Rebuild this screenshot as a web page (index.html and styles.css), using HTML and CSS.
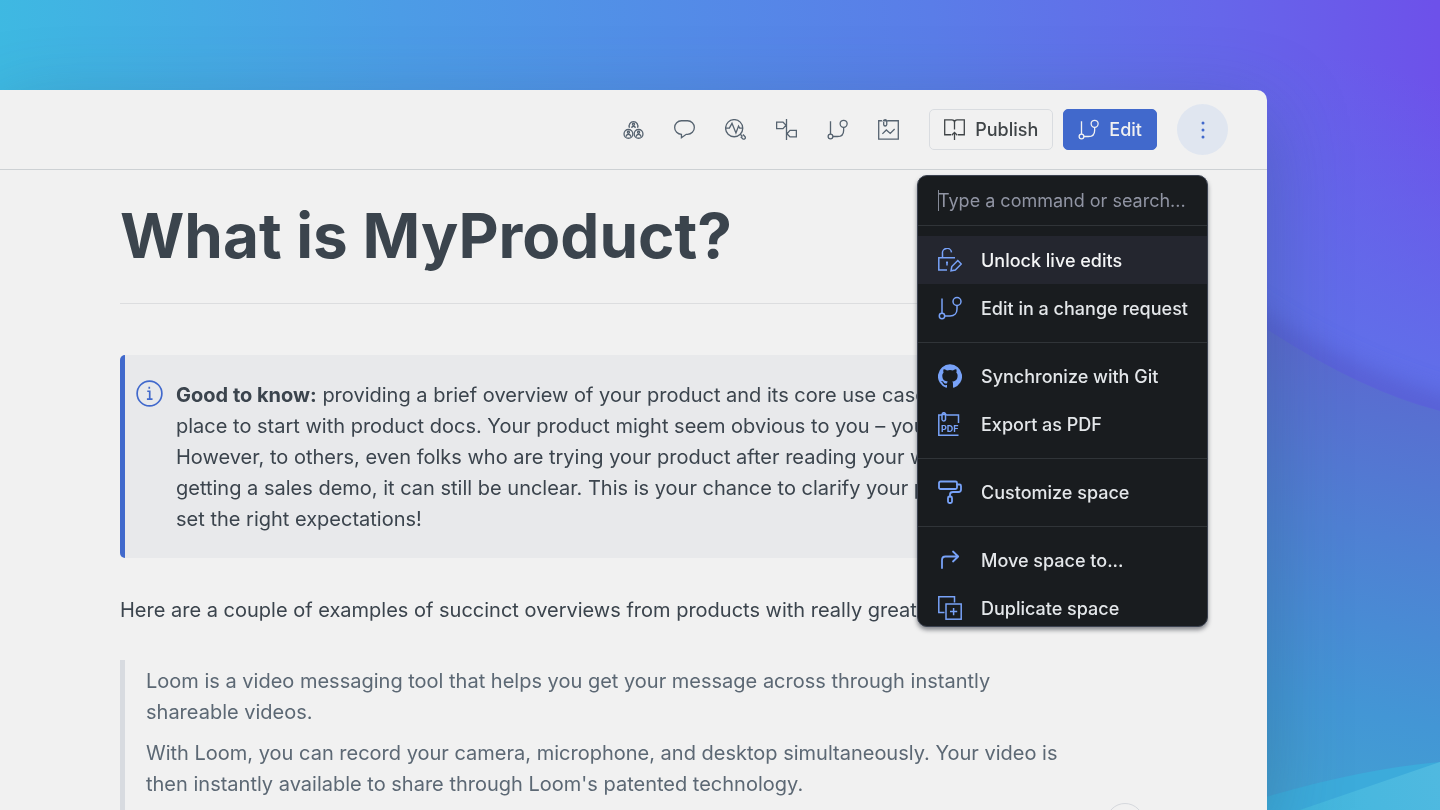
FILE: index.html
```html
<!DOCTYPE html>
<html lang="en">
<head>
<meta charset="utf-8">
<title>What is MyProduct?</title>
<link rel="stylesheet" href="styles.css">
</head>
<body>
<svg class="backdrop" viewBox="0 0 1440 810" preserveAspectRatio="none" aria-hidden="true">
  <defs>
    <linearGradient id="sky" gradientUnits="userSpaceOnUse" x1="0" y1="60" x2="1430" y2="-60">
      <stop offset="0" stop-color="#3eb9e2"/>
      <stop offset="0.28" stop-color="#4c9ce6"/>
      <stop offset="0.65" stop-color="#5a7de8"/>
      <stop offset="0.85" stop-color="#6666ea"/>
      <stop offset="1" stop-color="#6d51ea"/>
    </linearGradient>
    <linearGradient id="dome" gradientUnits="userSpaceOnUse" x1="1400" y1="70" x2="1300" y2="340">
      <stop offset="0" stop-color="#626be9" stop-opacity="0"/>
      <stop offset="1" stop-color="#6070e9"/>
    </linearGradient>
    <linearGradient id="sea" gradientUnits="userSpaceOnUse" x1="1400" y1="360" x2="1310" y2="790">
      <stop offset="0" stop-color="#5b69d0"/>
      <stop offset="0.4" stop-color="#4f80d3"/>
      <stop offset="0.8" stop-color="#4396d5"/>
      <stop offset="1" stop-color="#429fd3"/>
    </linearGradient>
    <linearGradient id="wave" gradientUnits="userSpaceOnUse" x1="1440" y1="760" x2="1300" y2="810">
      <stop offset="0" stop-color="#50b9e0"/>
      <stop offset="1" stop-color="#43b7de"/>
    </linearGradient>
    <filter id="soft" x="-50%" y="-50%" width="200%" height="200%"><feGaussianBlur stdDeviation="12"/></filter>
  </defs>
  <rect width="1440" height="810" fill="url(#sky)"/>
  <rect x="1240" y="60" width="200" height="370" fill="url(#dome)"/>
  <path d="M1200 284Q1330 385 1480 420" fill="none" stroke="#5356c8" stroke-width="26" opacity="0.7" filter="url(#soft)"/>
  <path d="M1240 311Q1350 388 1440 411V810H1240Z" fill="url(#sea)"/>
  <path d="M1240 805Q1350 770 1440 762V810H1240Z" fill="#3cabdb"/>
  <path d="M1300 810L1440 762V810Z" fill="url(#wave)"/>
</svg>

<svg class="sprite" aria-hidden="true">
  <symbol id="branch" viewBox="0 0 24 24"><path d="M4 2.5v15"/><circle cx="4" cy="20" r="2.7"/><circle cx="19" cy="5.5" r="4"/><path d="M6.700 20H12C16.500 20 19 17 19 13V9.500"/></symbol>
</svg>

<div class="window">
  <header class="toolbar">
    <nav class="tools" aria-label="Page tools">
      <button class="tool" aria-label="Team"><svg class="icon" viewBox="0 0 24 24"><path d="M7.400 10A5 5 0 1 1 16.600 10"/><circle cx="12" cy="6" r="1.200"/><path d="M10 10.300q0-2 2-2t2 2"/><circle cx="6.200" cy="17" r="5"/><circle cx="6.200" cy="15.200" r="1.200"/><path d="M3.500 20.300q.2-2.800 2.700-2.800t2.700 2.800"/><circle cx="17.800" cy="17" r="5"/><circle cx="17.800" cy="15.200" r="1.200"/><path d="M15.100 20.300q.2-2.800 2.700-2.800t2.700 2.800"/></svg></button>
      <button class="tool" aria-label="Comments"><svg class="icon" viewBox="0 0 24 24"><path d="M8.500 2h7a7.500 7.500 0 0 1 0 15.500H14L8.500 21.500V17.500A7.500 7.500 0 0 1 8.500 2Z"/></svg></button>
      <button class="tool" aria-label="Insights"><svg class="icon" viewBox="0 0 24 24"><circle cx="10.500" cy="10.500" r="9.800"/><path d="M.7 10.500H5L8 5l4.500 11 3-8 1.300 2.500h3.500M17.500 17.500l2.500 2.500M20.500 17.800l2.200 2.200q1.200 1.400 0 2.500t-2.500 0L18 20.200"/></svg></button>
      <button class="tool" aria-label="Outline"><svg class="icon" viewBox="0 0 24 24"><path d="M12 0v24M.7 3.500H8L11.500 7.200 8 11H.7ZM23.300 13H16L12.500 16.800 16 20.500h7.300Z"/></svg></button>
      <button class="tool" aria-label="Change requests"><svg class="icon"><use href="#branch"/></svg></button>
      <button class="tool" aria-label="Files"><svg class="icon" viewBox="0 0 24 24"><path d="M4.500 2H.8V23H23.200V2H11M6.500 3.500V6.500q.2 1.500 1.700 1.500T10 6.500V2.500Q9.700.8 8.200.8T6 2.200H11M5 17l4.500-4.500 4.500 4 5-5"/></svg></button>
    </nav>
    <div class="actions">
      <button class="btn"><svg class="icon" viewBox="0 0 24 24"><path d="M8 18H.8V1H9q3 0 3 3 0-3 3-3H23.200V18H16M12 4V12M12 24V15.500M8.800 18.500 12 15.300l3.200 3.200"/></svg>Publish</button>
      <button class="btn btn-primary"><svg class="icon"><use href="#branch"/></svg>Edit</button>
    </div>
    <div class="more">
      <button class="more-button" aria-label="More actions" aria-expanded="true"><svg class="dots" viewBox="0 0 24 24"><circle cx="12" cy="5" r="1.500"/><circle cx="12" cy="12" r="1.500"/><circle cx="12" cy="19" r="1.500"/></svg></button>
      <div class="menu">
        <div class="search"><input class="search-input" type="text" aria-label="Command" placeholder="Type a command or search..."></div>
        <div class="group">
          <button class="item active"><svg class="icon" viewBox="0 0 24 24"><path d="M4.500 9.500V5.500a4.500 4.500 0 0 1 9-1.200M9 22H.8V9.800H17M9 13.500v4M8 14.500h2M13 22.800l.8-4.300 6-6 3.500 3.500-6 6Z"/></svg>Unlock live edits</button>
          <button class="item"><svg class="icon"><use href="#branch"/></svg>Edit in a change request</button>
        </div>
        <div class="group">
          <button class="item"><svg class="icon solid" viewBox="0 0 24 24"><path d="M12 .3a12 12 0 0 0-3.800 23.400c.6.1.8-.3.800-.6v-2c-3.300.7-4-1.600-4-1.600-.6-1.400-1.400-1.800-1.400-1.800-1-.7.1-.7.1-.7 1.200 0 1.900 1.200 1.900 1.200 1 1.800 2.800 1.300 3.500 1 0-.8.4-1.300.7-1.600-2.700-.3-5.500-1.300-5.500-6 0-1.200.5-2.300 1.300-3.100-.2-.4-.6-1.600 0-3.200 0 0 1-.3 3.400 1.200a11.500 11.500 0 0 1 6 0c2.300-1.500 3.300-1.200 3.300-1.200.6 1.600.2 2.800 0 3.200.9.800 1.300 1.900 1.300 3.200 0 4.600-2.800 5.600-5.500 5.900.5.400.9 1 .9 2.200v3.300c0 .3.1.7.800.6A12 12 0 0 0 12 .3"/></svg>Synchronize with Git</button>
          <button class="item"><svg class="icon" viewBox="0 0 24 24"><path d="M4 3H.8V23.200H20.500M8.500 3H20.500V11M4 2.500V7.500q.2 1.500 1.700 1.500T7.500 7.500V2.200Q7.300.7 5.800.7T4 2.500H8.500"/><text class="badge-text" x="3" y="20">PDF</text></svg>Export as PDF</button>
        </div>
        <div class="group">
          <button class="item"><svg class="icon bold" viewBox="0 0 24 24"><rect x="1" y="1.500" width="18" height="7.500" rx="1.500"/><path d="M19 4.500H21.500Q23 4.500 23 6V9.500Q23 12 20.500 12H15Q12 12 12 14.500V16.500"/><rect x="10" y="16.500" width="4" height="6.500" rx="1.500"/></svg>Customize space</button>
        </div>
        <div class="group">
          <button class="item"><svg class="icon bold" viewBox="0 0 24 24"><path d="M4 20V12Q4 8.500 7.500 8.500H20M15 3.500 20.200 8.500 15 13.500"/></svg>Move space to...</button>
          <button class="item"><svg class="icon" viewBox="0 0 24 24"><path d="M6.500 16.500H.8V.8H16.500V6.500"/><rect x="8" y="8" width="15.200" height="15.200"/><path d="M15.600 12v7.200M12 15.600h7.200"/></svg>Duplicate space</button>
        </div>
      </div>
    </div>
  </header>

  <main class="page">
    <h1 class="title">What is MyProduct?</h1>
    <div class="hint">
      <svg class="hint-icon" viewBox="0 0 24 24" aria-hidden="true"><circle cx="12" cy="12" r="11"/><path d="M10 10h2.200v7M9.700 17h5M11.800 6v1.800"/></svg>
      <p class="hint-text"><strong>Good to know:</strong> providing a brief overview of your product and its core use cases is a great place to start with product docs. Your product might seem obvious to you – you made it! However, to others, even folks who are trying your product after reading your website or getting a sales demo, it can still be unclear. This is your chance to clarify your product and set the right expectations!</p>
    </div>
    <p class="lead">Here are a couple of examples of succinct overviews from products with really great overviews:</p>
    <blockquote class="quote">
      <p>Loom is a video messaging tool that helps you get your message across through instantly shareable videos.</p>
      <p>With Loom, you can record your camera, microphone, and desktop simultaneously. Your video is then instantly available to share through Loom's patented technology.</p>
    </blockquote>
  </main>
  <button class="help" aria-label="Help"></button>
</div>
</body>
</html>
```
FILE: styles.css
```css
* { box-sizing: border-box; }

body {
  margin: 0;
  height: 100vh;
  padding: 90px 173px 0 0;
  overflow: hidden;
  font-family: Inter, "Liberation Sans", sans-serif;
  color: #3b444d;
}

button, input { font: inherit; color: inherit; }
button { border: 0; padding: 0; background: none; cursor: pointer; }
h1, p, blockquote { margin: 0; }

.backdrop { position: fixed; inset: 0; z-index: -1; width: 100%; height: 100%; }
.sprite { position: absolute; width: 0; height: 0; }

.window {
  position: relative;
  height: 100%;
  overflow: hidden;
  background: #f1f1f1;
  border-radius: 0 10px 0 0;
  box-shadow: 0 24px 80px rgba(40, 80, 110, 0.35);
}

.toolbar {
  display: flex;
  align-items: center;
  justify-content: flex-end;
  height: 80px;
  padding-right: 39px;
  border-bottom: 1px solid #cdd1d4;
}

.icon {
  flex: none;
  width: 24px;
  height: 24px;
  fill: none;
  stroke: currentColor;
  stroke-width: 1.5;
}
.solid { fill: currentColor; stroke: none; }
.bold { stroke-width: 1.8; stroke-linecap: round; stroke-linejoin: round; }

.tools { display: flex; gap: 30px; margin-right: 30px; color: #566370; }
.tool { display: flex; }
.tool .icon { width: 21px; height: 21px; }

.actions { display: flex; gap: 10px; margin-right: 20px; }
.btn {
  display: flex;
  align-items: center;
  gap: 10px;
  height: 41px;
  padding: 0 14px;
  border: 1px solid #d9dce0;
  border-radius: 5px;
  font-size: 18px;
  font-weight: 500;
  color: #3f4447;
}
.btn .icon { width: 21px; height: 21px; }
.btn-primary { background: #4169cc; border-color: #4169cc; color: #f1f1f1; }

.more { position: relative; }
.more-button {
  display: flex;
  align-items: center;
  justify-content: center;
  width: 51px;
  height: 51px;
  border-radius: 50%;
  background: #e0e6f0;
  color: #4169cc;
}
.dots { width: 24px; height: 24px; fill: currentColor; }

.menu {
  position: absolute;
  z-index: 2;
  top: 71px;
  right: 20px;
  width: 291px;
  height: 452px;
  overflow: hidden;
  background: #191c1f;
  border: 1px solid #3b4250;
  border-radius: 10px;
  box-shadow: 0 3px 4px rgba(30, 34, 44, 0.5);
  font-size: 18px;
  font-weight: 500;
  color: #e4e7ea;
}

.search { padding: 0 20px; border-bottom: 1px solid #303438; }
.search-input {
  display: block;
  width: 100%;
  height: 49px;
  padding: 0;
  border: 0;
  outline: 0;
  background: linear-gradient(#858a97, #858a97) left center / 1px 21px no-repeat;
  font-weight: 400;
}
.search-input::placeholder { color: #9094a3; opacity: 1; }

.group { padding: 9px 0 10px; border-bottom: 1px solid #303438; }
.search + .group { padding-top: 10px; }
.item {
  display: flex;
  align-items: center;
  gap: 19px;
  width: 100%;
  height: 48px;
  padding: 0 20px;
  white-space: nowrap;
}
.item .icon { color: #78a2f8; }
.active { background: #24262f; color: #f4f5f6; }
.badge-text { font-size: 9px; font-weight: 700; fill: currentColor; stroke: none; }

.page { max-width: 1075px; padding-left: 120px; font-size: 20px; line-height: 31px; }
.title {
  margin-bottom: 51px;
  padding: 26px 0 28px;
  border-bottom: 1px solid #dcdddf;
  font-size: 62px;
  font-weight: 700;
  line-height: 79px;
}
.hint {
  display: flex;
  gap: 13px;
  padding: 25px 24px 23px 11px;
  border-left: 5px solid #4169cc;
  border-radius: 5px;
  background: #e8e9eb;
}
.hint-icon { flex: none; width: 27px; height: 27px; fill: none; stroke: #4169cc; stroke-width: 1.5; }
.lead { margin: 37px 0 34px; }
.quote {
  display: grid;
  gap: 10px;
  padding: 6px 0 30px 21px;
  border-left: 5px solid #d8dbe0;
  color: #5c6874;
}

.help {
  position: absolute;
  right: 123px;
  bottom: -31px;
  width: 38px;
  height: 38px;
  border: 1px solid #d5d8dd;
  border-radius: 50%;
}
```
